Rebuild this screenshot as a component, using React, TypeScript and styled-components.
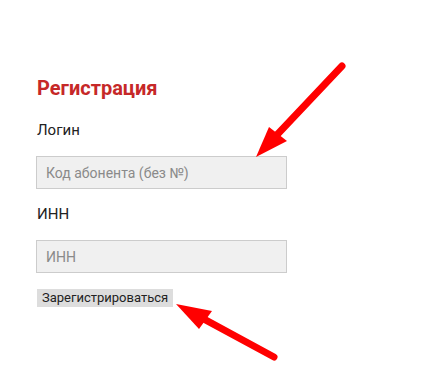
import styled, { createGlobalStyle } from "styled-components";

const GlobalStyle = createGlobalStyle`
  html, body {
    margin: 0;
    padding: 0;
    background: #ffffff;
  }
  body {
    font-family: Roboto, "Liberation Sans", Arial, sans-serif;
    color: #222;
  }
`;

const Page = styled.div`
  position: relative;
  width: 422px;
  height: 391px;
  overflow: hidden;
  background: #fff;
`;

const Form = styled.form`
  display: flex;
  flex-direction: column;
  align-items: flex-start;
  padding: 76px 0 0 36px;
`;

const Title = styled.h2`
  margin: 0 0 21px 1px;
  font-size: 20px;
  font-weight: 700;
  line-height: 24px;
  color: #c62828;
`;

const Label = styled.label`
  margin: 0 0 17px 1px;
  font-size: 15px;
  line-height: 18px;
  color: #222;
`;

const Input = styled.input`
  box-sizing: border-box;
  width: 251px;
  height: 33px;
  margin: 0 0 16px;
  padding: 0 9px;
  font-family: Roboto, "Liberation Sans", Arial, sans-serif;
  font-size: 14px;
  background: #f0f0f0;
  border: 1px solid #cccccc;
  border-radius: 0;
  outline: none;

  &::placeholder {
    color: #8a8a8a;
  }
`;

const Submit = styled.button`
  margin: 0 0 0 1px;
  padding: 0 5px;
  height: 18px;
  font-family: Roboto, "Liberation Sans", Arial, sans-serif;
  font-size: 13px;
  line-height: 18px;
  color: #222;
  background: #dddddd;
  border: none;
  border-radius: 0;
`;

const Arrows = styled.svg`
  position: absolute;
  left: 0;
  top: 0;
  pointer-events: none;
`;

function Arrow({ from, to, wingA, wingB }: { from: string; to: string; wingA: string; wingB: string }) {
  const [fx, fy] = from.split(",").map(Number);
  const [tx, ty] = to.split(",").map(Number);
  const mx = tx + (fx - tx) * 0.22;
  const my = ty + (fy - ty) * 0.22;
  return (
    <g>
      <line x1={fx} y1={fy} x2={mx} y2={my} stroke="#ff0000" strokeWidth={7} strokeLinecap="round" />
      <polygon points={`${to} ${wingA} ${wingB}`} fill="#ff0000" />
    </g>
  );
}

export default function App() {
  return (
    <Page>
      <GlobalStyle />
      <Form onSubmit={(e) => e.preventDefault()}>
        <Title>Регистрация</Title>
        <Label>Логин</Label>
        <Input placeholder="Код абонента (без №)" />
        <Label>ИНН</Label>
        <Input placeholder="ИНН" />
        <Submit type="submit">Зарегистрироваться</Submit>
      </Form>
      <Arrows width="422" height="391" viewBox="0 0 422 391">
        <Arrow from="342,66" to="256,157" wingA="269,127" wingB="287,141" />
        <Arrow from="274,357" to="176,304" wingA="212,311" wingB="199,329" />
      </Arrows>
    </Page>
  );
}
